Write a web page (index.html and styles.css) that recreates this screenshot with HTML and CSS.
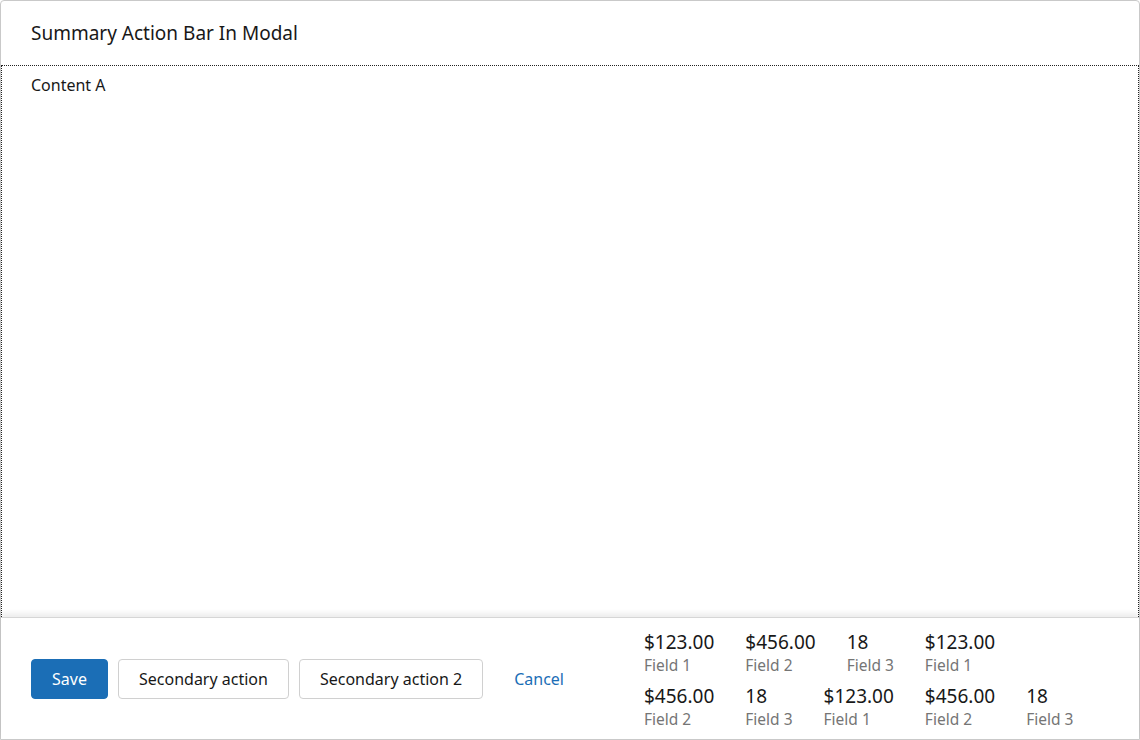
FILE: index.html
```html
<!DOCTYPE html>
<html lang="en">
<head>
<meta charset="utf-8">
<title>Summary Action Bar In Modal</title>
<link rel="stylesheet" href="styles.css">
</head>
<body>
<div class="modal">
  <header class="modal-header">
    <h2 class="modal-title">Summary Action Bar In Modal</h2>
  </header>
  <div class="modal-content" tabindex="0">
    <p class="content-text">Content A</p>
  </div>
  <footer class="modal-footer">
    <div class="actions">
      <button class="btn btn-brand">Save</button>
      <button class="btn btn-neutral">Secondary action</button>
      <button class="btn btn-neutral">Secondary action 2</button>
      <button class="btn btn-link">Cancel</button>
    </div>
    <div class="summary">
      <div class="summary-row">
        <div class="summary-item"><div class="value">$123.00</div><div class="label">Field 1</div></div>
        <div class="summary-item"><div class="value">$456.00</div><div class="label">Field 2</div></div>
        <div class="summary-item"><div class="value">18</div><div class="label">Field 3</div></div>
        <div class="summary-item"><div class="value">$123.00</div><div class="label">Field 1</div></div>
      </div>
      <div class="summary-row">
        <div class="summary-item"><div class="value">$456.00</div><div class="label">Field 2</div></div>
        <div class="summary-item"><div class="value">18</div><div class="label">Field 3</div></div>
        <div class="summary-item"><div class="value">$123.00</div><div class="label">Field 1</div></div>
        <div class="summary-item"><div class="value">$456.00</div><div class="label">Field 2</div></div>
        <div class="summary-item"><div class="value">18</div><div class="label">Field 3</div></div>
      </div>
    </div>
  </footer>
</div>
</body>
</html>
```
FILE: styles.css
```css
html, body {
  margin: 0;
  padding: 0;
  background: #ffffff;
}

body {
  font-family: "Noto Sans", "Open Sans", sans-serif;
  color: #181818;
}

.modal {
  width: 1140px;
  height: 740px;
  box-sizing: border-box;
  border: 1px solid #c9c9c9;
  border-radius: 4px 4px 0 0;
  display: flex;
  flex-direction: column;
  background: #fff;
}

.modal-header {
  height: 64px;
  flex: none;
  display: flex;
  align-items: center;
  padding: 0 30px;
}

.modal-title {
  margin: 0;
  font-size: 19px;
  font-weight: 400;
  line-height: 26px;
  color: #181818;
}

.modal-content {
  flex: 1;
  border: 1px dotted #222;
  border-bottom: none;
  padding: 6px 29px 8px;
  outline: none;
}

.content-text {
  margin: 0;
  font-size: 16px;
  line-height: 26px;
}

.modal-footer {
  height: 122px;
  flex: none;
  box-sizing: border-box;
  border-top: 1px solid #d6d6d6;
  box-shadow: 0 -4px 5px rgba(0, 0, 0, 0.07);
  position: relative;
  display: flex;
  align-items: center;
  padding: 0 30px;
}

.actions {
  display: flex;
  align-items: center;
  gap: 10px;
}

.btn {
  font-family: inherit;
  font-size: 16px;
  height: 40px;
  box-sizing: border-box;
  border-radius: 4px;
  padding: 0 20px;
  cursor: pointer;
}

.btn-brand {
  background: #1b6eb6;
  border: 1px solid #1b6eb6;
  color: #ffffff;
  width: 77px;
  padding: 0;
}

.btn-neutral {
  background: #ffffff;
  border: 1px solid #d0d0d0;
  color: #181818;
}

.btn-link {
  background: transparent;
  border: 1px solid transparent;
  color: #1b6eb6;
  margin-left: 0;
}

.summary {
  margin-left: 59px;
  display: flex;
  flex-direction: column;
  gap: 7px;
  padding-top: 1px;
}

.summary-row {
  display: flex;
  gap: 31px;
}

.value {
  font-size: 19px;
  line-height: 26px;
  color: #181818;
}

.label {
  font-size: 15.5px;
  line-height: 21px;
  color: #757575;
}
```
